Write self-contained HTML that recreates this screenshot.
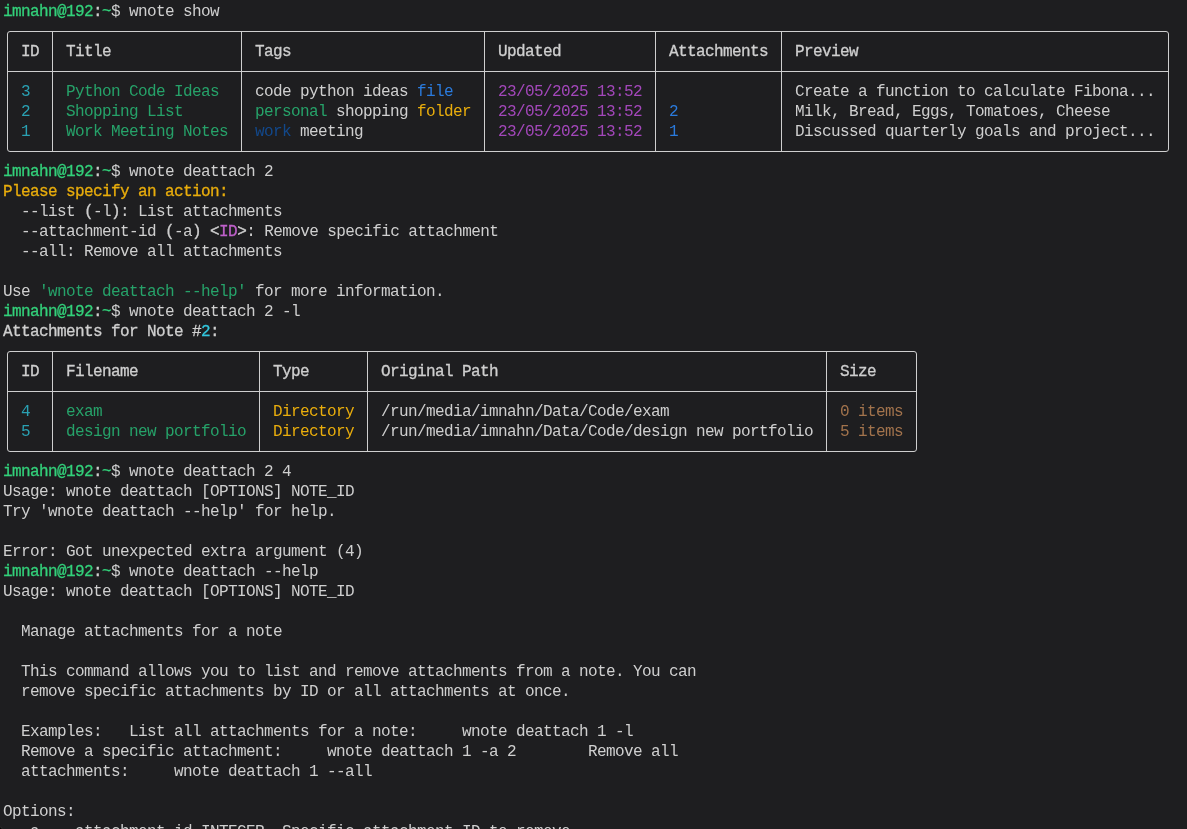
<!DOCTYPE html><html><head><meta charset="utf-8"><style>
html,body{margin:0;padding:0;width:1187px;height:829px;overflow:hidden;background:#1e1e20;}
#t{position:relative;will-change:transform;width:1187px;height:829px;font-family:"Liberation Mono",monospace;font-size:16px;line-height:20px;color:#cfcfcf;letter-spacing:-0.6px}
.r{position:absolute;white-space:pre;height:20px}
b{font-weight:normal;-webkit-text-stroke-width:0.3px}
.bx{position:absolute;border:1px solid #cfcfcf;border-radius:3px;box-sizing:border-box}
.v{position:absolute;width:1px;background:#cfcfcf}
.h{position:absolute;height:1px;background:#cfcfcf}

.g{color:#26a269}
.G{color:#33d17a}
.c{color:#2aa1b3}
.C{color:#33c7de}
.b{color:#12488b}
.B{color:#2a7bde}
.y{color:#a2734c}
.Y{color:#e9ad0c}
.m{color:#a347ba}
.M{color:#c061cb}
.w{color:#cfcfcf}
.W{color:#ffffff}
</style></head><body><div id="t">
<div class="bx" style="left:7px;top:31px;width:1162px;height:121px"></div>
<div class="v" style="left:52px;top:31px;height:121px"></div>
<div class="v" style="left:241px;top:31px;height:121px"></div>
<div class="v" style="left:484px;top:31px;height:121px"></div>
<div class="v" style="left:655px;top:31px;height:121px"></div>
<div class="v" style="left:781px;top:31px;height:121px"></div>
<div class="h" style="left:7px;top:71px;width:1162px"></div>
<div class="bx" style="left:7px;top:351px;width:910px;height:101px"></div>
<div class="v" style="left:52px;top:351px;height:101px"></div>
<div class="v" style="left:259px;top:351px;height:101px"></div>
<div class="v" style="left:367px;top:351px;height:101px"></div>
<div class="v" style="left:826px;top:351px;height:101px"></div>
<div class="h" style="left:7px;top:391px;width:910px"></div>
<div class="r" style="left:3px;top:2px"><b class="G">imnahn@192</b><b class="w">:</b><b class="G">~</b>$ wnote show</div>
<div class="r" style="left:21px;top:42px"><b>ID</b></div>
<div class="r" style="left:66px;top:42px"><b>Title</b></div>
<div class="r" style="left:255px;top:42px"><b>Tags</b></div>
<div class="r" style="left:498px;top:42px"><b>Updated</b></div>
<div class="r" style="left:669px;top:42px"><b>Attachments</b></div>
<div class="r" style="left:795px;top:42px"><b>Preview</b></div>
<div class="r" style="left:21px;top:82px"><span class="c">3</span></div>
<div class="r" style="left:66px;top:82px"><span class="g">Python Code Ideas</span></div>
<div class="r" style="left:255px;top:82px">code python ideas <span class="B">file</span></div>
<div class="r" style="left:498px;top:82px"><span class="m">23/05/2025 13:52</span></div>
<div class="r" style="left:795px;top:82px">Create a function to calculate Fibona...</div>
<div class="r" style="left:21px;top:102px"><span class="c">2</span></div>
<div class="r" style="left:66px;top:102px"><span class="g">Shopping List</span></div>
<div class="r" style="left:255px;top:102px"><span class="g">personal</span> shopping <span class="Y">folder</span></div>
<div class="r" style="left:498px;top:102px"><span class="m">23/05/2025 13:52</span></div>
<div class="r" style="left:669px;top:102px"><span class="B">2</span></div>
<div class="r" style="left:795px;top:102px">Milk, Bread, Eggs, Tomatoes, Cheese</div>
<div class="r" style="left:21px;top:122px"><span class="c">1</span></div>
<div class="r" style="left:66px;top:122px"><span class="g">Work Meeting Notes</span></div>
<div class="r" style="left:255px;top:122px"><span class="b">work</span> meeting</div>
<div class="r" style="left:498px;top:122px"><span class="m">23/05/2025 13:52</span></div>
<div class="r" style="left:669px;top:122px"><span class="B">1</span></div>
<div class="r" style="left:795px;top:122px">Discussed quarterly goals and project...</div>
<div class="r" style="left:3px;top:162px"><b class="G">imnahn@192</b><b class="w">:</b><b class="G">~</b>$ wnote deattach 2</div>
<div class="r" style="left:3px;top:182px"><b class="Y">Please specify an action:</b></div>
<div class="r" style="left:3px;top:202px">  --list <b>(</b>-l<b>)</b>: List attachments</div>
<div class="r" style="left:3px;top:222px">  --attachment-id <b>(</b>-a<b>)</b> <b>&lt;</b><b class="M">ID</b><b>&gt;</b>: Remove specific attachment</div>
<div class="r" style="left:3px;top:242px">  --all: Remove all attachments</div>
<div class="r" style="left:3px;top:282px">Use <span class="g">&#x27;wnote deattach --help&#x27;</span> for more information.</div>
<div class="r" style="left:3px;top:302px"><b class="G">imnahn@192</b><b class="w">:</b><b class="G">~</b>$ wnote deattach 2 -l</div>
<div class="r" style="left:3px;top:322px"><b>Attachments for Note #</b><b class="C">2</b><b>:</b></div>
<div class="r" style="left:21px;top:362px"><b>ID</b></div>
<div class="r" style="left:66px;top:362px"><b>Filename</b></div>
<div class="r" style="left:273px;top:362px"><b>Type</b></div>
<div class="r" style="left:381px;top:362px"><b>Original Path</b></div>
<div class="r" style="left:840px;top:362px"><b>Size</b></div>
<div class="r" style="left:21px;top:402px"><span class="c">4</span></div>
<div class="r" style="left:66px;top:402px"><span class="g">exam</span></div>
<div class="r" style="left:273px;top:402px"><span class="Y">Directory</span></div>
<div class="r" style="left:381px;top:402px">/run/media/imnahn/Data/Code/exam</div>
<div class="r" style="left:840px;top:402px"><span class="y">0 items</span></div>
<div class="r" style="left:21px;top:422px"><span class="c">5</span></div>
<div class="r" style="left:66px;top:422px"><span class="g">design new portfolio</span></div>
<div class="r" style="left:273px;top:422px"><span class="Y">Directory</span></div>
<div class="r" style="left:381px;top:422px">/run/media/imnahn/Data/Code/design new portfolio</div>
<div class="r" style="left:840px;top:422px"><span class="y">5 items</span></div>
<div class="r" style="left:3px;top:462px"><b class="G">imnahn@192</b><b class="w">:</b><b class="G">~</b>$ wnote deattach 2 4</div>
<div class="r" style="left:3px;top:482px">Usage: wnote deattach [OPTIONS] NOTE_ID</div>
<div class="r" style="left:3px;top:502px">Try &#x27;wnote deattach --help&#x27; for help.</div>
<div class="r" style="left:3px;top:542px">Error: Got unexpected extra argument (4)</div>
<div class="r" style="left:3px;top:562px"><b class="G">imnahn@192</b><b class="w">:</b><b class="G">~</b>$ wnote deattach --help</div>
<div class="r" style="left:3px;top:582px">Usage: wnote deattach [OPTIONS] NOTE_ID</div>
<div class="r" style="left:3px;top:622px">  Manage attachments for a note</div>
<div class="r" style="left:3px;top:662px">  This command allows you to list and remove attachments from a note. You can</div>
<div class="r" style="left:3px;top:682px">  remove specific attachments by ID or all attachments at once.</div>
<div class="r" style="left:3px;top:722px">  Examples:   List all attachments for a note:     wnote deattach 1 -l</div>
<div class="r" style="left:3px;top:742px">  Remove a specific attachment:     wnote deattach 1 -a 2        Remove all</div>
<div class="r" style="left:3px;top:762px">  attachments:     wnote deattach 1 --all</div>
<div class="r" style="left:3px;top:802px">Options:</div>
<div class="r" style="left:3px;top:822px">  -a, --attachment-id INTEGER  Specific attachment ID to remove</div>
</div><div style="position:absolute;left:0;top:825px;width:4px;height:4px;background:radial-gradient(circle at 0 100%, #000 0, #000 0.8px, #2a2a2a 2px, #1e1e20 3px)"></div></body></html>
